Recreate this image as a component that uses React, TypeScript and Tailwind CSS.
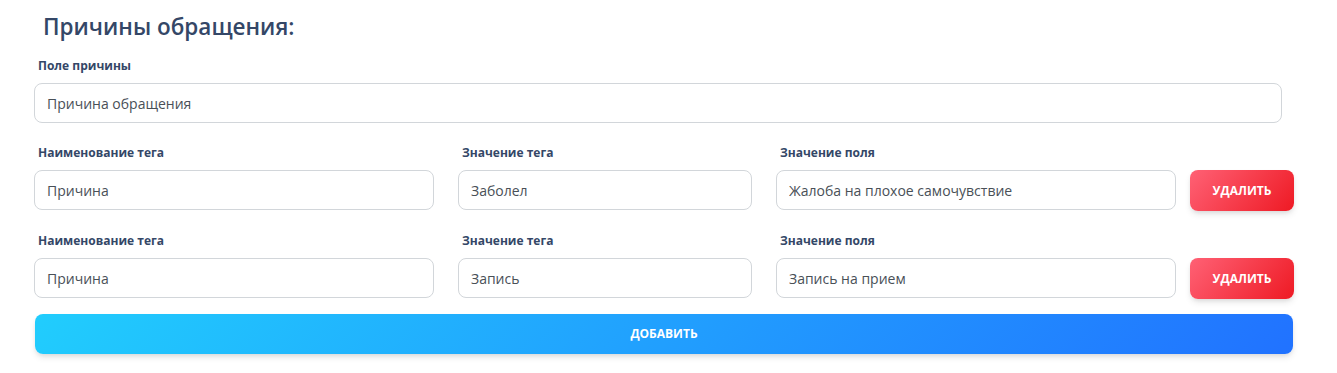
const rows = [
  { tag: "Причина", value: "Заболел", field: "Жалоба на плохое самочувствие" },
  { tag: "Причина", value: "Запись", field: "Запись на прием" },
];

function Label({ children }: { children: React.ReactNode }) {
  return (
    <label className="mb-[9px] ml-1 block text-[12px] leading-[16px] font-bold text-[#344767]">
      {children}
    </label>
  );
}

function Field({ value }: { value: string }) {
  return (
    <input
      readOnly
      value={value}
      className="block h-10 w-full rounded-lg border border-[#d2d6da] bg-white px-3 text-sm text-[#495057] outline-none"
    />
  );
}

export default function App() {
  return (
    <div className="min-h-[373px] bg-white font-['Open_Sans',sans-serif]">
      <div className="pl-[34px] pt-[10px]">
        <h2 className="ml-[9px] mb-[14px] text-[22.5px] leading-[34px] font-semibold text-[#344767]">
          Причины обращения:
        </h2>

        <div className="w-[1248px]">
          <Label>Поле причины</Label>
          <Field value="Причина обращения" />
        </div>

        <div className="mt-[22px] flex flex-col gap-[23px] w-[1260px]">
          {rows.map((r, i) => (
            <div key={i} className="flex items-end">
              <div className="w-[400px]">
                <Label>Наименование тега</Label>
                <Field value={r.tag} />
              </div>
              <div className="ml-6 w-[294px]">
                <Label>Значение тега</Label>
                <Field value={r.value} />
              </div>
              <div className="ml-6 w-[400px]">
                <Label>Значение поля</Label>
                <Field value={r.field} />
              </div>
              <button className="ml-[14px] mb-[-1px] h-[41px] w-[104px] rounded-lg bg-linear-[310deg] from-[#ee1a24] to-[#ff6175] text-xs font-bold text-white uppercase shadow-[0_4px_7px_-1px_rgba(0,0,0,0.11),0_2px_4px_-1px_rgba(0,0,0,0.07)]">
                Удалить
              </button>
            </div>
          ))}
        </div>

        <button className="mt-[16px] ml-px h-10 w-[1258px] rounded-lg bg-linear-[310deg] from-[#2172ff] to-[#21cdfd] text-xs font-bold text-white uppercase shadow-[0_4px_7px_-1px_rgba(0,0,0,0.11),0_2px_4px_-1px_rgba(0,0,0,0.07)]">
          Добавить
        </button>
      </div>
    </div>
  );
}
